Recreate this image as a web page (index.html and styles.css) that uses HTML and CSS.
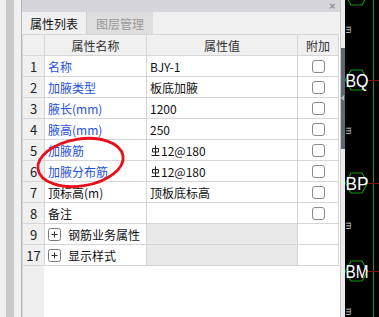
FILE: index.html
```html
<!DOCTYPE html>
<html>
<head>
<meta charset="utf-8">
<link rel="stylesheet" href="styles.css">
</head>
<body>
<div class="app">
  <div class="dock-left"><div class="dock-bar"></div></div>
  <div class="panel">
    <div class="titlebar"><span class="close">×</span></div>
    <div class="tabs">
      <div class="tab active">属性列表</div>
      <div class="tab inactive">图层管理</div>
    </div>
    <div class="grid">
      <div class="c num hd"></div><div class="c hd">属性名称</div><div class="c hd">属性值</div><div class="c hd">附加</div>

      <div class="c num">1</div><div class="c name">名称</div><div class="c val">BJY-1</div><div class="c add"><span class="cb"></span></div>
      <div class="c num">2</div><div class="c name">加腋类型</div><div class="c val">板底加腋</div><div class="c add"><span class="cb"></span></div>
      <div class="c num">3</div><div class="c name">腋长(mm)</div><div class="c val">1200</div><div class="c add"><span class="cb"></span></div>
      <div class="c num">4</div><div class="c name">腋高(mm)</div><div class="c val">250</div><div class="c add"><span class="cb"></span></div>
      <div class="c num">5</div><div class="c name">加腋筋</div><div class="c val"><svg class="rebar" width="9" height="11" viewBox="0 0 9 11"><path d="M4.5 0.5V10M1.5 3.5H7.5V7H1.5Z M0.5 10.5H8.5" fill="none" stroke="#222" stroke-width="1"/></svg>12@180</div><div class="c add"><span class="cb"></span></div>
      <div class="c num">6</div><div class="c name">加腋分布筋</div><div class="c val"><svg class="rebar" width="9" height="11" viewBox="0 0 9 11"><path d="M4.5 0.5V10M1.5 3.5H7.5V7H1.5Z M0.5 10.5H8.5" fill="none" stroke="#222" stroke-width="1"/></svg>12@180</div><div class="c add"><span class="cb"></span></div>
      <div class="c num">7</div><div class="c plain">顶标高(m)</div><div class="c val">顶板底标高</div><div class="c add"><span class="cb"></span></div>
      <div class="c num">8</div><div class="c plain">备注</div><div class="c val"></div><div class="c add"><span class="cb"></span></div>
      <div class="c num">9</div><div class="c plain group"><svg class="plus" width="13" height="13" viewBox="0 0 13 13"><rect x="0.5" y="0.5" width="12" height="12" rx="2" fill="#fff" stroke="#7a7a7a"/><path d="M3.5 6.5H9.5M6.5 3.5V9.5" stroke="#333"/></svg>钢筋业务属性</div><div class="c val shade"></div><div class="c add"></div>
      <div class="c num">17</div><div class="c plain group"><svg class="plus" width="13" height="13" viewBox="0 0 13 13"><rect x="0.5" y="0.5" width="12" height="12" rx="2" fill="#fff" stroke="#7a7a7a"/><path d="M3.5 6.5H9.5M6.5 3.5V9.5" stroke="#333"/></svg>显示样式</div><div class="c val shade"></div><div class="c add"></div>
    </div>
    <div class="filler"></div>
    <svg class="mark" width="318" height="317" viewBox="0 0 318 317"><ellipse cx="58.5" cy="162.5" rx="43" ry="23.5" transform="rotate(-9 58.5 162.5)" fill="none" stroke="#e8101a" stroke-width="2.8"/></svg>
  </div>
  <div class="scroll"><div class="thumb"><span class="arrow"></span></div></div>
  <div class="canvas">
    <svg width="34" height="317" viewBox="0 0 34 317">
      <line x1="28.5" y1="0" x2="28.5" y2="317" stroke="#0a9a0a" stroke-width="1"/>
      <line x1="23" y1="80.5" x2="34" y2="80.5" stroke="#8a0a0a"/>
      <line x1="23" y1="183.5" x2="34" y2="183.5" stroke="#8a0a0a"/>
      <line x1="23" y1="271.5" x2="34" y2="271.5" stroke="#8a0a0a"/>
      <g fill="none" stroke="#149a14" stroke-width="1.1">
        <polygon points="0.5,-5 6,-15 17,-15 22.5,-5 17,5 6,5"/>
        <polygon points="0.5,80 6,70 17,70 22.5,80 17,90 6,90"/>
        <polygon points="0.5,183 6,173 17,173 22.5,183 17,193 6,193"/>
        <polygon points="0.5,271 6,261 17,261 22.5,271 17,281 6,281"/>
      </g>
      <g fill="#fff" font-family="Liberation Sans, Arial, sans-serif" font-size="18">
        <text x="0.5" y="87" textLength="23" lengthAdjust="spacingAndGlyphs">BQ</text>
        <text x="0.5" y="190" textLength="23" lengthAdjust="spacingAndGlyphs">BP</text>
        <text x="0.5" y="278" textLength="23" lengthAdjust="spacingAndGlyphs">BM</text>
      </g>
      <g fill="#ddd" font-family="Liberation Sans, Arial, sans-serif" font-size="9">
        <text transform="translate(1,26) rotate(90)">m</text>
        <text transform="translate(1,127) rotate(90)">m</text>
        <text transform="translate(1,222) rotate(90)">m</text>
        <text transform="translate(1,308) rotate(90)">m</text>
      </g>
    </svg>
  </div>
</div>
</body>
</html>
```
FILE: styles.css
```css
* { box-sizing: border-box; margin: 0; padding: 0; }
html, body { width: 379px; height: 317px; overflow: hidden; }
body {
  font-family: "Noto Sans CJK SC", "Noto Sans", sans-serif;
  font-size: 12px;
  color: #111;
  background: #f0f0f0;
}
.app { display: flex; height: 317px; }

.dock-left { width: 21px; flex: none; background: #f0f0f0; padding-left: 6px; }
.dock-bar { width: 8px; height: 100%; background: #c9c9c9; }

.panel {
  position: relative;
  width: 320px;
  flex: none;
  display: flex;
  flex-direction: column;
  border-left: 1px solid #b4b4b4;
  border-right: 1px solid #c8c8c8;
  background: #fff;
}
.titlebar {
  height: 12px;
  flex: none;
  background: #d6d6da;
  display: flex;
  justify-content: flex-end;
  align-items: center;
  padding-right: 4px;
}
.close { font-family: "DejaVu Sans", sans-serif; font-size: 9px; color: #8a8a8a; font-weight: bold; line-height: 12px; }

.tabs { height: 22px; flex: none; background: #f0f0f0; display: flex; }
.tab { display: flex; align-items: center; justify-content: center; height: 22px; font-size: 12px; }
.tab.active { width: 65px; color: #111; border-right: 1px solid #d0d0d0; }
.tab.inactive { width: 66px; background: #dedede; color: #9a9a9a; }

.grid {
  display: grid;
  grid-template-columns: 21px 101px 150px 40px;
  grid-auto-rows: 20px;
  gap: 1px;
  background: #d6d6d6;
  border: 1px solid #d6d6d6;
  width: 317px;
  flex: none;
}
.c {
  background: #fff;
  display: flex;
  align-items: center;
  padding: 0 3px;
  white-space: nowrap;
  overflow: hidden;
  font-size: 12px;
}
.num { background: #f0f0f0; justify-content: center; padding: 0; color: #222; font-size: 13px; }
.hd { background: #f0f0f0; justify-content: center; color: #333; }
.name { color: #1f52e0; }
.plain { color: #111; }
.val { color: #111; padding-left: 3px; }
.shade { background: #e9e9e9; }
.add { justify-content: center; padding: 0; }
.cb {
  width: 13px;
  height: 13px;
  border: 1px solid #8a8a8a;
  border-radius: 3px;
  background: #fff;
  margin-left: 1px;
}
.rebar { margin: 0 1px 0 1px; flex: none; }
.plus { margin-right: 7px; margin-left: 0; flex: none; }

.filler {
  flex: 1;
  border-left: 1px solid #d6d6d6;
  background: linear-gradient(to right, #efefef 21px, #fff 21px);
  width: 317px;
}
.mark { position: absolute; left: 0; top: 0; pointer-events: none; }

.scroll { width: 4px; flex: none; background: #ececec; }
.thumb { margin-top: 48px; height: 101px; background: #5f6770; position: relative; }
.arrow {
  position: absolute;
  left: 0;
  top: 47px;
  width: 0;
  height: 0;
  border-top: 3px solid transparent;
  border-bottom: 3px solid transparent;
  border-right: 3px solid #b8bcc0;
}

.canvas { width: 34px; flex: none; background: #000; overflow: hidden; }
.canvas svg { display: block; }
```
